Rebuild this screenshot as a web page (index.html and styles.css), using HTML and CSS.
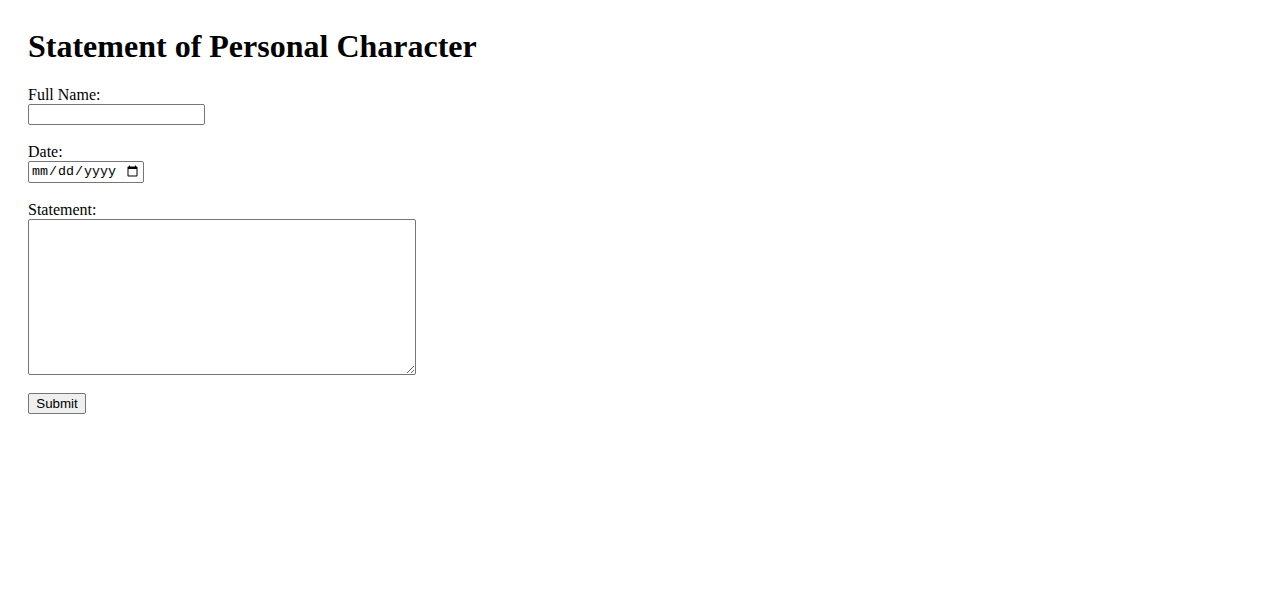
FILE: index.html
```html
<!DOCTYPE html>
<html lang="en">
<head>
<meta charset="utf-8">
<title>Statement of Personal Character</title>
<link rel="stylesheet" href="styles.css">
</head>
<body>
<h1 class="title">Statement of Personal Character</h1>
<form class="form">
  <div class="field">
    <label class="label" for="name">Full Name:</label>
    <input class="text-input" type="text" id="name">
  </div>
  <div class="field">
    <label class="label" for="date">Date:</label>
    <input class="date-input" type="date" id="date">
  </div>
  <div class="field">
    <label class="label" for="statement">Statement:</label>
    <textarea class="textarea" id="statement"></textarea>
  </div>
  <button class="submit" type="submit">Submit</button>
</form>
</body>
</html>
```
FILE: styles.css
```css
body {
  margin: 8px;
  padding: 20px;
  font-family: "Liberation Serif", "Times New Roman", serif;
  font-size: 16px;
  color: #000;
  background: #fff;
}
.title {
  font-size: 32px;
  font-weight: bold;
  margin: 0 0 21px 0;
  line-height: 37px;
}
.form {
  display: flex;
  flex-direction: column;
  align-items: flex-start;
}
.field {
  display: flex;
  flex-direction: column;
  align-items: flex-start;
  margin-bottom: 18px;
}
.label {
  line-height: 18px;
}
.text-input {
  box-sizing: border-box;
  width: 177px;
  height: 21px;
  margin: 0;
  border: 1px solid #767676;
  border-radius: 2px;
  padding: 1px 2px;
}
.date-input {
  box-sizing: border-box;
  width: 116px;
  height: 22px;
  margin: 0;
  border: 1px solid #767676;
  border-radius: 2px;
  padding: 1px 2px;
  font-family: "Liberation Mono", "DejaVu Sans Mono", monospace;
  font-size: 13.33px;
}
.textarea {
  box-sizing: border-box;
  width: 388px;
  height: 156px;
  margin: 0;
  border: 1px solid #767676;
  border-radius: 2px;
  padding: 2px;
  font-family: "Liberation Mono", monospace;
  font-size: 13.33px;
}
.submit {
  box-sizing: border-box;
  width: 58px;
  height: 21px;
  margin: 0;
  padding: 1px 6px;
  font-family: "Liberation Sans", Arial, sans-serif;
  font-size: 13.33px;
  color: #000;
  background: #efefef;
  border: 1px solid #767676;
  border-radius: 2px;
}
```
